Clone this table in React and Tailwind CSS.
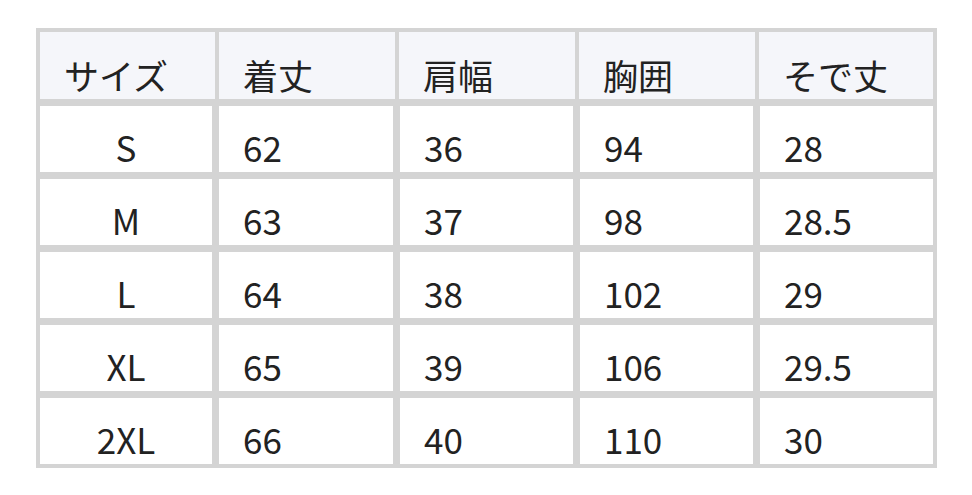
import React from 'react'

const headers = ['サイズ', '着丈', '肩幅', '胸囲', 'そで丈']

const rows = [
  ['S', '62', '36', '94', '28'],
  ['M', '63', '37', '98', '28.5'],
  ['L', '64', '38', '102', '29'],
  ['XL', '65', '39', '106', '29.5'],
  ['2XL', '66', '40', '110', '30'],
]

const font = { fontFamily: '"Noto Sans CJK JP", "Noto Sans", sans-serif' }

const SizeTable = () => {
  return (
    <div className="w-[901px] ml-[36px] mt-[28px] border-4 border-[#d4d4d4] bg-[#d4d4d4] flex flex-col gap-[7px]">
      <div className="grid grid-cols-[175px_176px_176px_176px_174px] gap-x-[4px] h-[67px]">
        {headers.map((h) => (
          <div key={h} className="bg-[#f5f6fa] flex items-end pl-6 pb-[7px] text-[35px] leading-none text-[#222]">
            {h}
          </div>
        ))}
      </div>
      {rows.map((row) => (
        <div key={row[0]} className="grid grid-cols-[172px_174px_173px_173px_173px] gap-x-[7px] h-[66px]">
          {row.map((cell, i) => (
            <div
              key={i}
              className={`bg-white flex items-end pb-[8px] text-[35px] leading-none text-[#222] ${
                i === 0 ? 'justify-center' : 'pl-6'
              }`}
            >
              {cell}
            </div>
          ))}
        </div>
      ))}
    </div>
  )
}

export default function App() {
  return (
    <div className="w-[972px] h-[495px] bg-white overflow-hidden" style={font}>
      <SizeTable />
    </div>
  )
}
